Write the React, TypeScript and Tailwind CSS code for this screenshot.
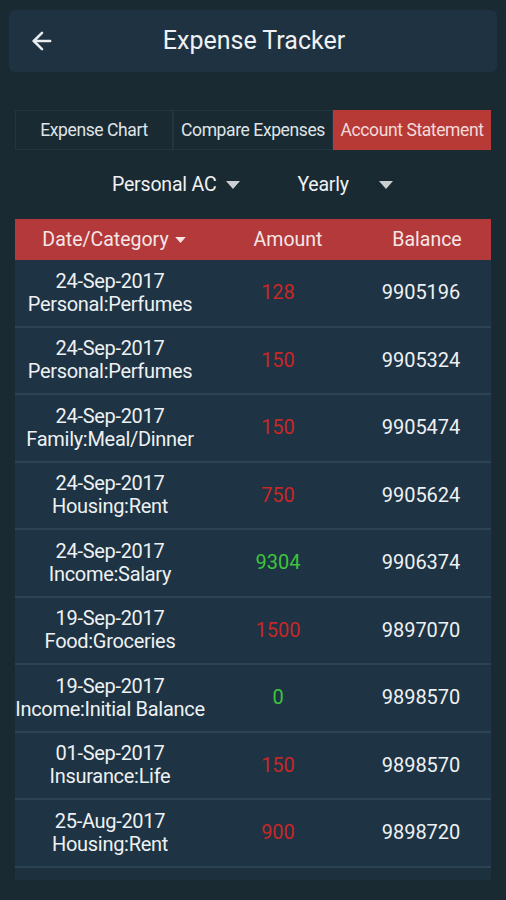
import { ArrowLeft } from "lucide-react";

type Row = { date: string; cat: string; amount: string; balance: string; income?: boolean };

const rows: Row[] = [
  { date: "24-Sep-2017", cat: "Personal:Perfumes", amount: "128", balance: "9905196" },
  { date: "24-Sep-2017", cat: "Personal:Perfumes", amount: "150", balance: "9905324" },
  { date: "24-Sep-2017", cat: "Family:Meal/Dinner", amount: "150", balance: "9905474" },
  { date: "24-Sep-2017", cat: "Housing:Rent", amount: "750", balance: "9905624" },
  { date: "24-Sep-2017", cat: "Income:Salary", amount: "9304", balance: "9906374", income: true },
  { date: "19-Sep-2017", cat: "Food:Groceries", amount: "1500", balance: "9897070" },
  { date: "19-Sep-2017", cat: "Income:Initial Balance", amount: "0", balance: "9898570", income: true },
  { date: "01-Sep-2017", cat: "Insurance:Life", amount: "150", balance: "9898570" },
  { date: "25-Aug-2017", cat: "Housing:Rent", amount: "900", balance: "9898720" },
];

function Caret({ className }: { className?: string }) {
  return (
    <svg viewBox="0 0 14 8" className={className} fill="currentColor">
      <path d="M0 0h14L7 8z" />
    </svg>
  );
}

export default function App() {
  return (
    <div
      className="w-[506px] h-[900px] bg-[#1a2a33] text-[#ecf0f1] overflow-hidden"
      style={{ fontFamily: "Roboto, 'Liberation Sans', sans-serif" }}
    >
      <div className="pt-[10px] px-[9px]">
        <div className="h-[62px] rounded-md bg-[#1f3242] flex items-center justify-center relative">
          <ArrowLeft size={28} strokeWidth={2.2} className="absolute left-[19px] top-[17px] text-[#e8ecef]" />
          <h1 className="text-[25px] text-[#eef1f3] pl-[2px]">Expense Tracker</h1>
        </div>
      </div>

      <div className="mx-[15px] mt-[38px] flex h-[40px] text-[17.5px] tracking-[-0.4px]">
        <div className="w-[158px] flex items-center justify-center border border-[#223642] text-[#dfe4e7]">
          Expense Chart
        </div>
        <div className="w-[160px] flex items-center justify-center border border-[#223642] text-[#dfe4e7]">
          Compare Expenses
        </div>
        <div className="flex-1 flex items-center justify-center bg-[#b83a36] text-[#f3dada]">
          Account Statement
        </div>
      </div>

      <div className="h-[69px] flex items-center text-[19.5px] text-[#f0f2f4] tracking-[-0.2px]">
        <div className="ml-[112px] flex items-center gap-[10px]">
          <span>Personal AC</span>
          <Caret className="w-[14px] h-[8px] text-[#c9cfd3]" />
        </div>
        <div className="ml-[57px] flex items-center gap-[30px]">
          <span>Yearly</span>
          <Caret className="w-[14px] h-[8px] text-[#c9cfd3]" />
        </div>
      </div>

      <div className="mx-[15px]">
        <div className="h-[41px] bg-[#b3393a] grid grid-cols-[190px_146px_1fr] items-center text-[19.5px] text-[#f5e6e6]">
          <div className="flex items-center justify-center gap-[6px] pl-[8px]">
            <span>Date/Category</span>
            <Caret className="w-[11px] h-[6px] text-[#f5e6e6]" />
          </div>
          <div className="text-center pl-[20px]">Amount</div>
          <div className="text-center pl-[12px]">Balance</div>
        </div>

        <div className="bg-[#1e3343]">
          {rows.map((r, i) => (
            <div
              key={i}
              className="h-[67.5px] grid grid-cols-[190px_146px_1fr] items-center border-b-2 border-[#2c4352] text-[20px] leading-[23px]"
            >
              <div className="text-center text-[#eef1f3] tracking-[-0.3px] whitespace-nowrap">
                <div>{r.date}</div>
                <div>{r.cat}</div>
              </div>
              <div className={`text-center ${r.income ? "text-[#3cc43c]" : "text-[#c62828]"}`}>
                {r.amount}
              </div>
              <div className="text-center text-[#eef1f3]">{r.balance}</div>
            </div>
          ))}
          <div className="h-[12px] bg-[#1d303e]" />
        </div>
      </div>
    </div>
  );
}
